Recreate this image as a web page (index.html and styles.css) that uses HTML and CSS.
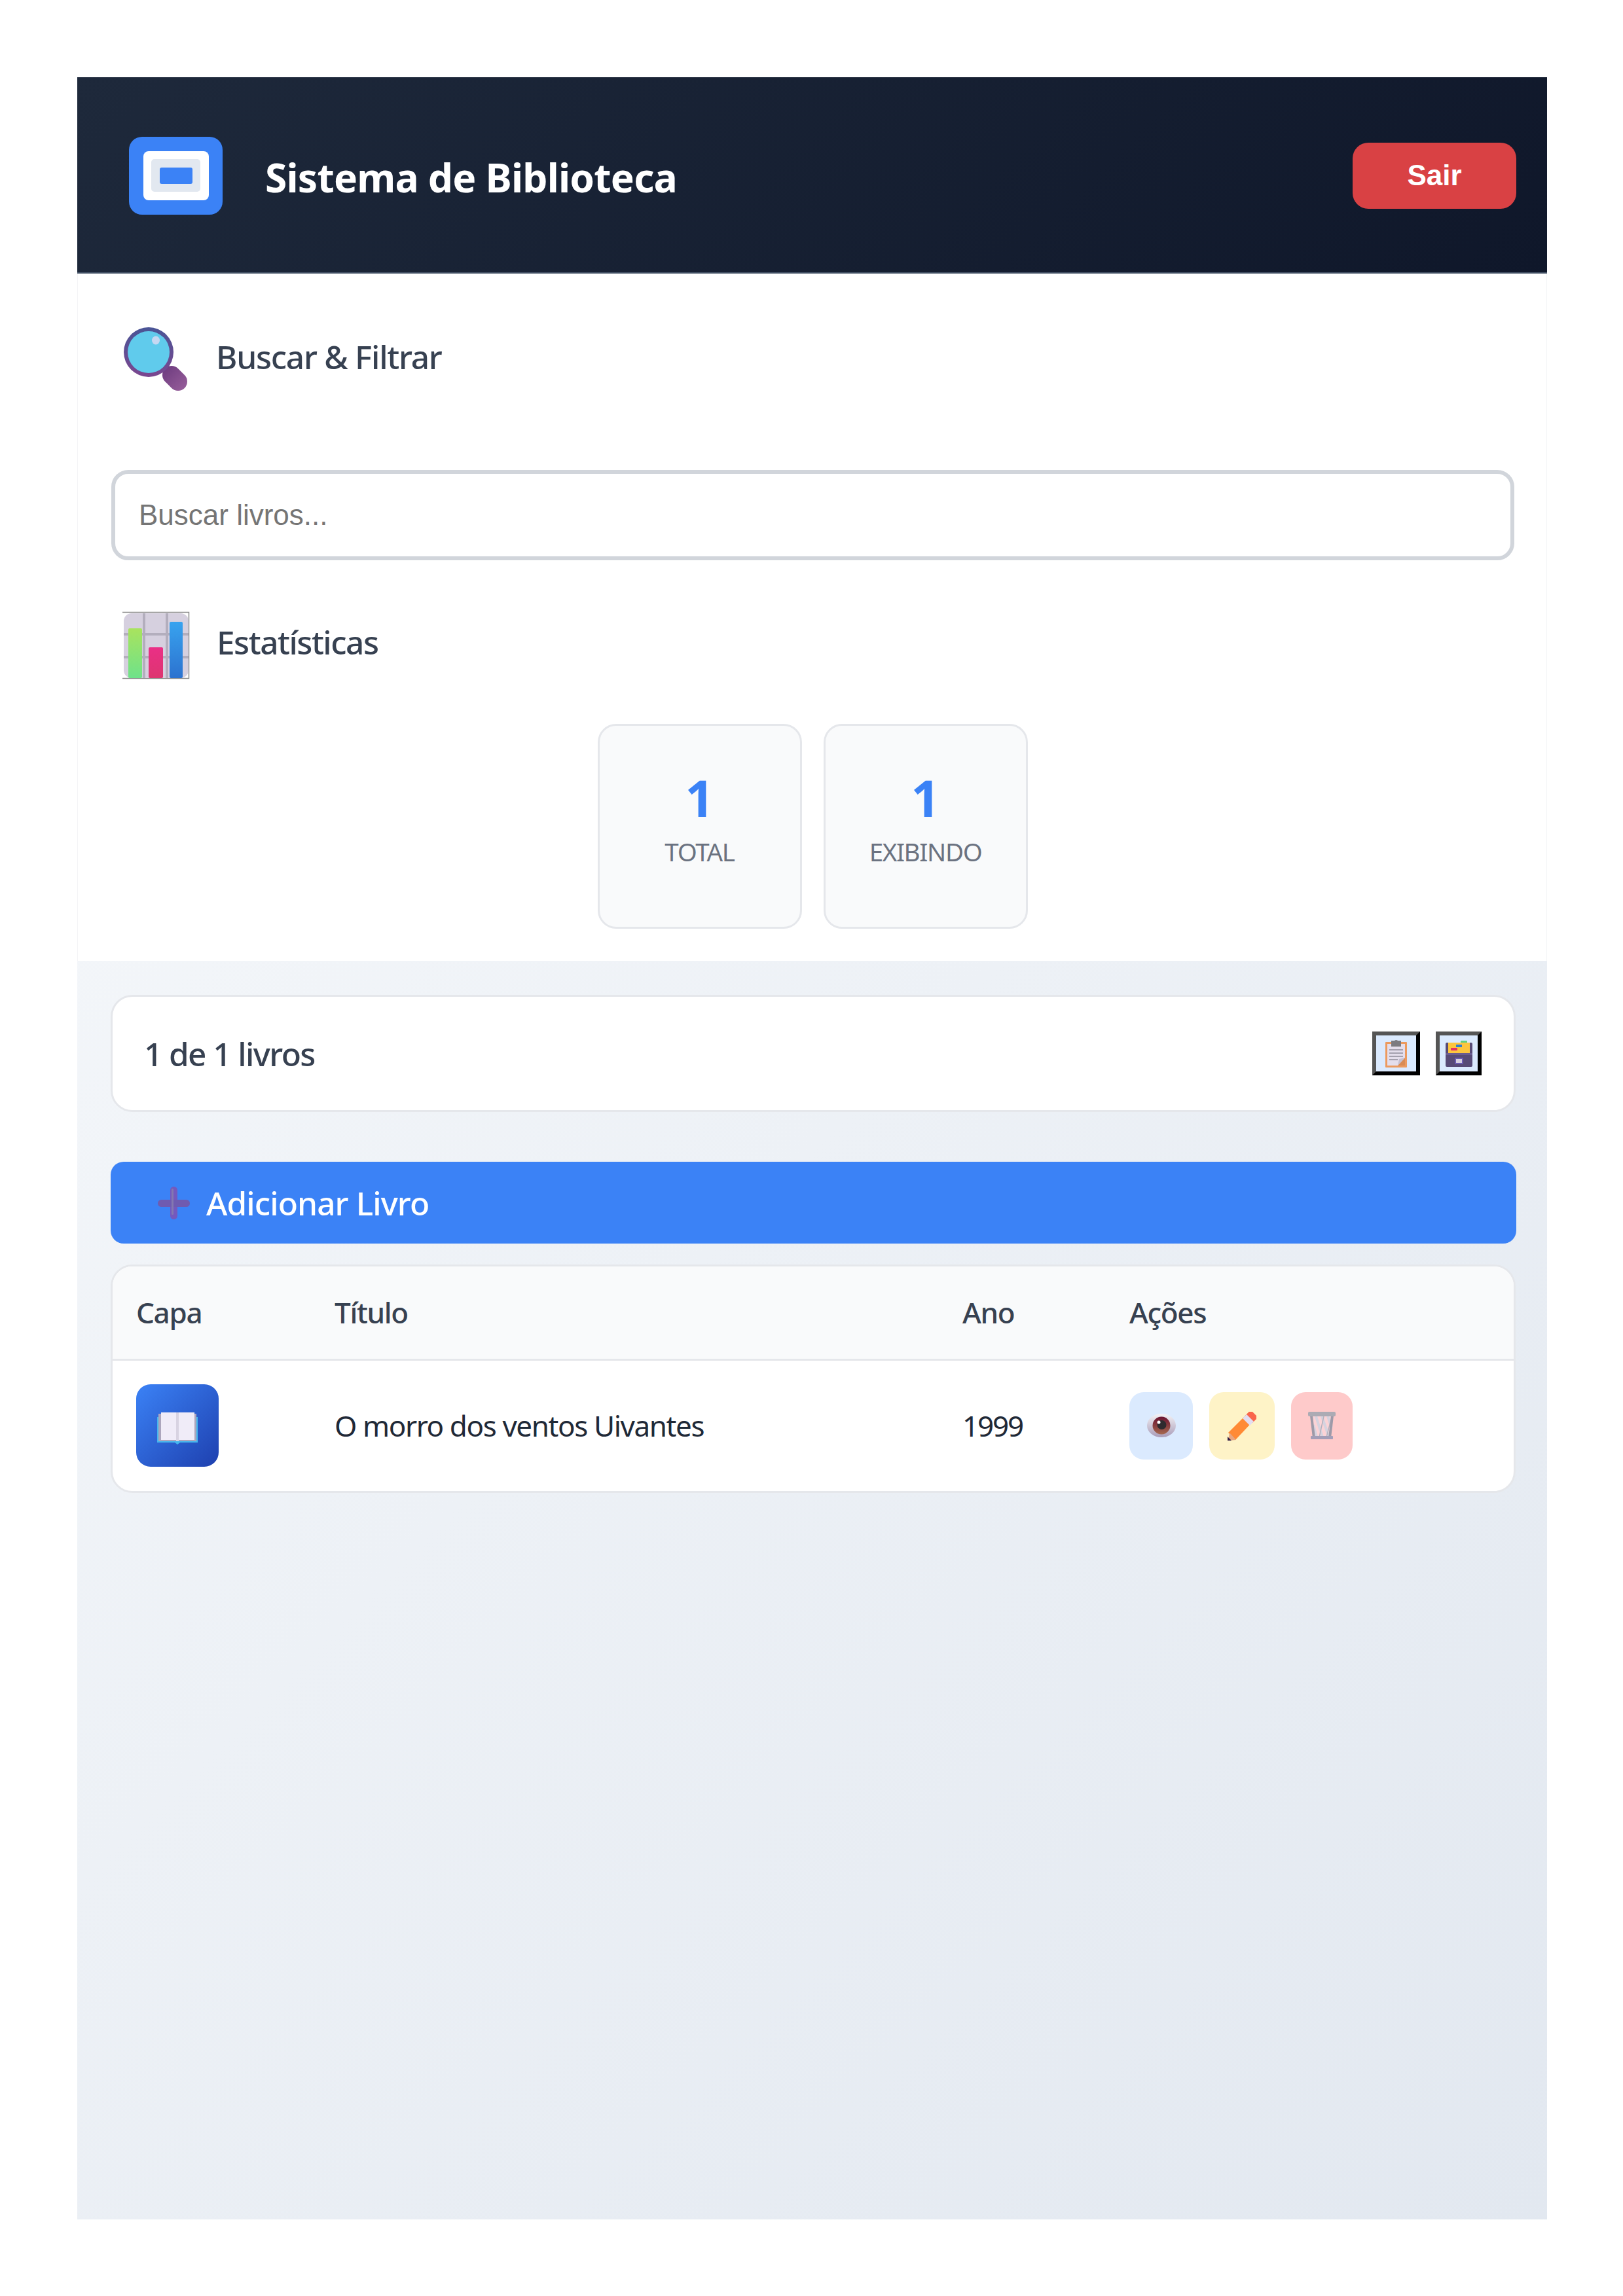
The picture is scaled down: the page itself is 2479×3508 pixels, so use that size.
FILE: index.html
```html
<!DOCTYPE html>
<html lang="pt-BR">
<head>
<meta charset="utf-8">
<title>Sistema de Biblioteca</title>
<link rel="stylesheet" href="styles.css">
</head>
<body>
<div class="app">
  <header class="topbar">
    <div class="logo"><div class="logo-white"><div class="logo-gray"><div class="logo-blue"></div></div></div></div>
    <h1 class="brand">Sistema de Biblioteca</h1>
    <button class="logout">Sair</button>
  </header>

  <section class="panel">
    <div class="section-head head-search">
      <svg class="head-icon" viewBox="0 0 100 100">
        <defs>
          <linearGradient id="ring" x1="0" y1="0" x2="0" y2="1"><stop offset="0" stop-color="#4a5596"/><stop offset="1" stop-color="#7b468f"/></linearGradient>
          <linearGradient id="handle" gradientUnits="userSpaceOnUse" x1="65" y1="62" x2="95" y2="94"><stop offset="0" stop-color="#6f3d80"/><stop offset="1" stop-color="#955c99"/></linearGradient>
        </defs>
        <line x1="75" y1="73" x2="85" y2="83" stroke="url(#handle)" stroke-width="28" stroke-linecap="round"/>
        <circle cx="40" cy="38" r="38" fill="url(#ring)"/>
        <circle cx="40" cy="38" r="32" fill="#60cbec"/>
        <ellipse cx="51" cy="20" rx="6" ry="6.5" fill="#c5d8f2"/>
      </svg>
      <h2 class="section-title">Buscar &amp; Filtrar</h2>
    </div>

    <input class="search" type="text" placeholder="Buscar livros...">

    <div class="section-head head-stats">
      <svg class="head-icon" viewBox="0 0 102 102">
        <defs>
          <linearGradient id="green" x1="0" y1="0" x2="0" y2="1"><stop offset="0" stop-color="#a9e35e"/><stop offset="1" stop-color="#6ee28a"/></linearGradient>
          <linearGradient id="pink" x1="0" y1="0" x2="0" y2="1"><stop offset="0" stop-color="#ea2f86"/><stop offset="1" stop-color="#dd3570"/></linearGradient>
          <linearGradient id="blue" x1="0" y1="0" x2="0" y2="1"><stop offset="0" stop-color="#38a3ef"/><stop offset="1" stop-color="#2c72cf"/></linearGradient>
        </defs>
        <path d="M0 0.5H101.5V101.5H0" fill="none" stroke="#8a8a8a" stroke-width="1.5"/>
        <rect x="2" y="2" width="99" height="99" rx="12" fill="#d6d0df"/>
        <path d="M33 2V101M68 2V101M2 34H101M2 69H101" stroke="#b3aebd" stroke-width="4"/>
        <rect x="9" y="25" width="21" height="76" rx="2" fill="url(#green)"/>
        <rect x="40" y="54" width="22" height="47" rx="2" fill="url(#pink)"/>
        <rect x="72" y="15" width="20" height="86" rx="2" fill="url(#blue)"/>
      </svg>
      <h2 class="section-title section-title-tight">Estatísticas</h2>
    </div>

    <div class="stats">
      <div class="stat"><div class="stat-value">1</div><div class="stat-label">TOTAL</div></div>
      <div class="stat"><div class="stat-value">1</div><div class="stat-label">EXIBINDO</div></div>
    </div>
  </section>

  <main class="content">
    <div class="toolbar">
      <span class="count">1 de 1 livros</span>
      <div class="toolbar-actions">
        <button class="tool tool-a" aria-label="Relatório">
          <svg class="ico-clip" viewBox="0 0 33 42">
            <rect x="0" y="3" width="33" height="39" rx="1" fill="#ec9a5e"/>
            <rect x="3" y="6" width="27" height="33" fill="#e4deec"/>
            <path d="M19 39 30 27V39Z" fill="#d98b54"/>
            <path d="M19 39 21 29 30 27Z" fill="#c5c0d2"/>
            <path d="M9 1h15v9H9Z" fill="#7c7b80"/>
            <circle cx="16.5" cy="3" r="3" fill="#7c7b80"/>
            <path d="M6 15h21M6 20h21M6 25h21M6 30h13" stroke="#8f8c99" stroke-width="1.6"/>
          </svg>
        </button>
        <button class="tool tool-b" aria-label="Salvar">
          <svg class="ico-drawer" viewBox="0 0 41 40">
            <rect x="23" y="0" width="10" height="6" rx="1" fill="#64d17f"/>
            <rect x="0" y="3" width="41" height="37" rx="2" fill="#574a76"/>
            <rect x="4" y="3" width="33" height="17" fill="#fdc53e"/>
            <rect x="16" y="6" width="9" height="4" fill="#2f80d0"/>
            <rect x="8" y="11" width="10" height="4" rx="1" fill="#e52f67"/>
            <rect x="0" y="19" width="41" height="3" fill="#6a5b90"/>
            <rect x="14" y="26" width="13" height="10" rx="1" fill="#6b5bb0"/>
            <rect x="16" y="28" width="9" height="6" fill="#d6d0df"/>
          </svg>
        </button>
      </div>
    </div>

    <button class="add">
      <svg class="ico-plus" viewBox="0 0 49 50">
        <rect x="19" y="0" width="11" height="50" rx="5.5" fill="#7459bd"/>
        <rect x="0" y="20" width="49" height="11" rx="5.5" fill="#6f5bb0"/>
        <rect x="21" y="3" width="3" height="40" rx="1.5" fill="#8478b0"/>
      </svg>
      <span>Adicionar Livro</span>
    </button>

    <div class="table-card">
      <table class="books">
        <thead>
          <tr><th class="col-cover">Capa</th><th class="col-title">Título</th><th class="col-year">Ano</th><th>Ações</th></tr>
        </thead>
        <tbody>
          <tr>
            <td>
              <div class="cover">
                <svg class="ico-book" viewBox="0 0 62 49">
                  <path d="M0 7H62V46H35L31 49 27 46H0Z" fill="#45b6ee"/>
                  <path d="M2 2H60V44H2Z" fill="#aca6bd"/>
                  <path d="M6 0H29V42H6Z" fill="#f0ecf8"/>
                  <path d="M33 0H57V42H33Z" fill="#f0ecf8"/>
                  <path d="M29 0H33V44H29Z" fill="#d8d3e2"/>
                </svg>
              </div>
            </td>
            <td class="book-title">O morro dos ventos Uivantes</td>
            <td class="book-year">1999</td>
            <td>
              <div class="actions">
                <button class="act act-view" aria-label="Ver">
                  <svg class="ico-eye" viewBox="0 0 44 36">
                    <defs>
                      <linearGradient id="sclera" x1="0" y1="0" x2="0" y2="1"><stop offset="0" stop-color="#f4f2f5"/><stop offset="1" stop-color="#a99cb8"/></linearGradient>
                      <linearGradient id="iris" x1="0" y1="0" x2="0" y2="1"><stop offset="0" stop-color="#6a1230"/><stop offset="1" stop-color="#a5694f"/></linearGradient>
                    </defs>
                    <ellipse cx="22" cy="18" rx="22" ry="18" fill="url(#sclera)"/>
                    <circle cx="22" cy="18" r="13.5" fill="url(#iris)"/>
                    <circle cx="22.5" cy="17" r="7" fill="#2e2a2e"/>
                    <circle cx="18" cy="13" r="2.5" fill="#fff"/>
                  </svg>
                </button>
                <button class="act act-edit" aria-label="Editar">
                  <svg class="ico-pencil" viewBox="0 0 45 45">
                    <path d="M1 33 33 1 44 10 12 44Z" fill="#ff8a35"/>
                    <path d="M27 7 33 1 38 1 44 7 44 12 38 18Z" fill="#f9654c"/>
                    <path d="M25 9 31 3 42 14 36 20Z" fill="#e3ddf0" transform="translate(-2 2)"/>
                    <path d="M3 33 13 44 1 45Z" fill="#e8a57e"/>
                    <path d="M0 39 6 45H0Z" fill="#321d45"/>
                  </svg>
                </button>
                <button class="act act-del" aria-label="Excluir">
                  <svg class="ico-trash" viewBox="0 0 42 42">
                    <path d="M4 5H38L34 40H8Z" fill="#fbd3d6"/>
                    <path d="M12 7 22 39M21 7 32 39M30 7 36 24M8 20 13 38" stroke="#d6d3df" stroke-width="4"/>
                    <path d="M24 7 17 39M35 12 28 39" stroke="#b4b1bd" stroke-width="1.5"/>
                    <path d="M5 6 9 40M37 6 33 40" stroke="#9d9aa8" stroke-width="4"/>
                    <rect x="0" y="0" width="42" height="7" rx="2" fill="#acabb4"/>
                    <rect x="4" y="37" width="34" height="5" rx="1" fill="#a39eb8"/>
                  </svg>
                </button>
              </div>
            </td>
          </tr>
        </tbody>
      </table>
    </div>
  </main>
</div>
</body>
</html>
```

FILE: styles.css
```css
* { box-sizing: border-box; }

body {
  margin: 0;
  padding: 118px 116px 117px 118px;
  background: #fff;
  font-family: "Noto Sans", "Open Sans", sans-serif;
  color: #1f2937;
}

button { font-family: inherit; cursor: pointer; }

.app {
  width: 2245px;
  height: 3273px;
  display: flex;
  flex-direction: column;
  background: linear-gradient(135deg, #f8fafc 0%, #e2e8f0 100%);
}

/* header */
.topbar {
  height: 300px;
  flex: none;
  display: flex;
  align-items: center;
  padding: 2px 47px 0 79px;
  background: linear-gradient(135deg, #1e293b 0%, #0f172a 100%);
  border-bottom: 2px solid #475569;
}

.logo {
  width: 143px;
  height: 119px;
  border-radius: 20px;
  background: #3b82f6;
  display: flex;
  align-items: center;
  justify-content: center;
}

.logo-white {
  width: 100px;
  height: 75px;
  border-radius: 8px;
  background: #fff;
  display: flex;
  align-items: center;
  justify-content: center;
}

.logo-gray {
  width: 75px;
  height: 50px;
  border-radius: 5px;
  background: #e2e8f0;
  display: flex;
  align-items: center;
  justify-content: center;
}

.logo-blue {
  width: 50px;
  height: 25px;
  border-radius: 3px;
  background: #3b82f6;
}

.brand {
  margin: 7px 0 0 65px;
  font-size: 60.5px;
  font-weight: 700;
  letter-spacing: -0.013em;
  line-height: 1.2;
  color: #fff;
}

.logout {
  margin-left: auto;
  width: 250px;
  height: 101px;
  border: 0;
  border-radius: 24px;
  background: #d94144;
  color: #fff;
  font-family: "Liberation Sans", Arial, sans-serif;
  font-size: 44px;
  font-weight: 700;
}

/* search + stats panel */
.panel {
  flex: none;
  background: #fff;
  padding: 0 50px 49px 51px;
  border-left: 1px solid #f3f4f6;
  border-right: 1px solid #f3f4f6;
}

.section-head {
  display: flex;
  align-items: center;
  padding-left: 17px;
}

.head-search { height: 100px; margin-top: 82px; gap: 43px; }
.head-stats { height: 102px; margin-top: 79px; gap: 42px; }

.head-icon { width: 100px; height: 100px; flex: none; overflow: visible; }
.head-stats .head-icon { width: 102px; height: 102px; }

.section-title {
  margin: 0 0 9px;
  font-size: 49.5px;
  font-weight: 500;
  letter-spacing: -0.025em;
  line-height: 1.2;
  color: #374151;
}

.section-title-tight { letter-spacing: -0.03em; }

.search {
  display: block;
  width: 2143px;
  height: 138px;
  margin-top: 118px;
  padding: 0 36px;
  border: 6px solid #d1d5db;
  border-radius: 26px;
  background: #fff;
  font-family: "Liberation Sans", Arial, sans-serif;
  font-size: 44px;
  outline: none;
}

.stats {
  display: flex;
  justify-content: center;
  gap: 33px;
  margin-top: 69px;
}

.stat {
  width: 312px;
  height: 313px;
  border: 3px solid #e5e7eb;
  border-radius: 28px;
  background: #f9fafb;
  text-align: center;
  padding-top: 57px;
}

.stat-value {
  font-size: 77px;
  font-weight: 700;
  line-height: 105px;
  color: #3b82f6;
}

.stat-label {
  margin-top: 4px;
  font-size: 38.5px;
  letter-spacing: -0.035em;
  line-height: 52px;
  color: #6b7280;
}

/* main content */
.content {
  flex: 1;
  padding: 52px 47px 0 51px;
}

.toolbar {
  height: 179px;
  margin-right: 1px;
  display: flex;
  align-items: center;
  justify-content: space-between;
  padding: 0 49px 0 48px;
  background: #fff;
  border: 3px solid #e5e7eb;
  border-radius: 33px;
}

.count {
  font-size: 49.5px;
  font-weight: 500;
  letter-spacing: -0.032em;
  color: #374151;
}

.toolbar-actions { display: flex; gap: 24px; }

.tool {
  height: 67px;
  padding: 0;
  border-width: 6px;
  border-style: solid;
  border-color: #555 #000 #000 #555;
  background: #dbeafe;
  display: flex;
  align-items: center;
  justify-content: center;
}

.tool-a { width: 73px; }
.tool-b { width: 70px; }

.ico-clip { width: 33px; height: 42px; }
.ico-drawer { width: 41px; height: 40px; }

.add {
  width: 2147px;
  height: 125px;
  margin: 76px 0 0 0;
  padding: 0 0 0 72px;
  display: flex;
  align-items: center;
  gap: 25px;
  border: 0;
  border-radius: 20px;
  background: #3b82f6;
  color: #fff;
  font-size: 49.5px;
  font-weight: 500;
  letter-spacing: -0.018em;
}

.ico-plus { width: 49px; height: 50px; flex: none; }

.table-card {
  margin: 32px 1px 0 0;
  background: #fff;
  border: 3px solid #e5e7eb;
  border-radius: 33px;
  overflow: hidden;
}

.books {
  width: 100%;
  border-collapse: collapse;
  table-layout: fixed;
}

.books th {
  height: 142px;
  padding: 0 36px;
  background: #f9fafb;
  border-bottom: 3px solid #e5e7eb;
  text-align: left;
  font-size: 44px;
  font-weight: 500;
  letter-spacing: -0.03em;
  color: #374151;
}

.col-cover { width: 303px; }
.col-title { width: 959px; }
.col-year { width: 255px; }

.books td {
  height: 201px;
  padding: 0 36px;
  font-size: 44px;
  color: #1f2937;
  vertical-align: middle;
}

.books .book-title { letter-spacing: -0.032em; }
.books .book-year { letter-spacing: -0.05em; }

.cover {
  width: 126px;
  height: 126px;
  border-radius: 22px;
  background: linear-gradient(135deg, #3b82f6 0%, #1e40af 100%);
  display: flex;
  align-items: center;
  justify-content: center;
}

.ico-book { width: 62px; height: 49px; margin-top: 8px; }

.actions { display: flex; gap: 25px; }

.act {
  height: 103px;
  padding: 0;
  border: 0;
  border-radius: 22px;
  display: flex;
  align-items: center;
  justify-content: center;
}

.act-view { width: 97px; background: #dbeafe; }
.act-edit { width: 100px; background: #fef3c7; }
.act-del { width: 94px; background: #fecaca; }

.ico-eye { width: 44px; height: 36px; }
.ico-pencil { width: 45px; height: 45px; }
.ico-trash { width: 42px; height: 42px; }
```
